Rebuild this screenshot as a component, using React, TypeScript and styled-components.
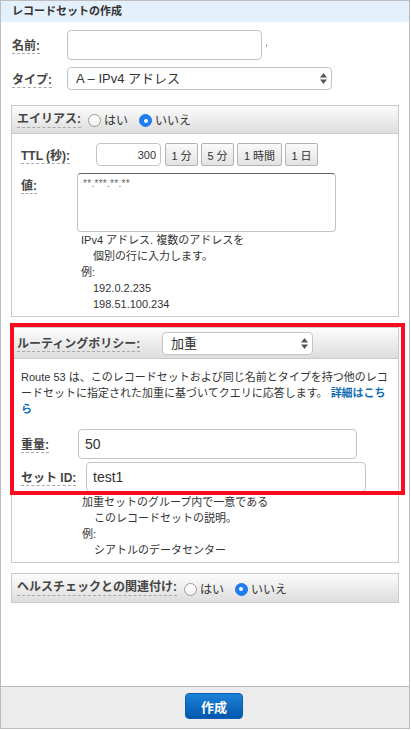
import styled, { createGlobalStyle } from 'styled-components'

const GlobalStyle = createGlobalStyle`
  body {
    margin: 0;
    background: #fff;
    font-family: "Liberation Sans", "Noto Sans CJK JP", sans-serif;
    color: #333;
  }
`

const Frame = styled.div`
  position: relative;
  width: 410px;
  height: 729px;
  box-sizing: border-box;
  border: 1px solid #bdbdbd;
  display: flex;
  flex-direction: column;
`

const Title = styled.div`
  height: 21px;
  line-height: 21px;
  padding-left: 11px;
  background: #e4f0fc;
  font-size: 11px;
  font-weight: bold;
  color: #333;
`

const Body = styled.div`
  flex: 1;
  padding: 8px 10px 0;
`

const Row = styled.div<{ $top?: number; $left?: number; $align?: string }>`
  display: flex;
  align-items: ${p => p.$align ?? 'center'};
  margin-top: ${p => p.$top ?? 0}px;
  padding-left: ${p => p.$left ?? 0}px;
`

const LabelCell = styled.div<{ $w?: number; $pt?: number }>`
  width: ${p => (p.$w ? `${p.$w}px` : 'auto')};
  flex: none;
  padding-top: ${p => p.$pt ?? 0}px;
`

const Label = styled.span`
  font-size: 12px;
  font-weight: bold;
  color: #444;
  line-height: 15px;
  border-bottom: 1px dashed #a8a8a8;
  white-space: nowrap;
`

const TextInput = styled.input<{ $w: number; $h?: number; $fs?: number; $right?: boolean }>`
  width: ${p => p.$w}px;
  height: ${p => p.$h ?? 30}px;
  box-sizing: border-box;
  border: 1px solid #c4c4c4;
  border-radius: 4px;
  padding: 0 ${p => (p.$right ? 4 : 6)}px;
  font-family: inherit;
  font-size: ${p => p.$fs ?? 14}px;
  color: #333;
  text-align: ${p => (p.$right ? 'right' : 'left')};
  background: #fff;
  outline: none;
`

const Tick = styled.span`
  width: 1px;
  height: 3px;
  margin-left: 4px;
  background: #aaa;
`

const SelectWrap = styled.div<{ $w: number }>`
  position: relative;
  width: ${p => p.$w}px;
  height: 23px;
`

const Select = styled.select`
  appearance: none;
  width: 100%;
  height: 100%;
  box-sizing: border-box;
  border: 1px solid #c4c4c4;
  border-radius: 4px;
  background: #fff;
  padding: 0 8px;
  font-family: inherit;
  font-size: 13px;
  color: #333;
  outline: none;
`

const Arrows = styled.svg`
  position: absolute;
  right: 5px;
  top: 6px;
  pointer-events: none;
`

const Panel = styled.div<{ $top: number }>`
  margin-top: ${p => p.$top}px;
  border: 1px solid #cacaca;
  background: #fff;
`

const PanelHeader = styled.div<{ $h: number; $sep?: boolean }>`
  height: ${p => p.$h}px;
  display: flex;
  align-items: center;
  padding-left: 5px;
  background: linear-gradient(#fcfcfc, #dddddd);
  border-bottom: ${p => (p.$sep ? '1px solid #cacaca' : 'none')};
`

const PanelBody = styled.div<{ $pt: number }>`
  padding: ${p => p.$pt}px 9px 4px;
`

const Radio = styled.label`
  display: flex;
  align-items: center;
  font-size: 12px;
  color: #333;
  margin-left: 7px;
  & + & {
    margin-left: 11px;
  }
`

const Dot = styled.span<{ $on?: boolean }>`
  width: 13px;
  height: 13px;
  box-sizing: border-box;
  border-radius: 50%;
  margin-right: 3px;
  margin-top: 2px;
  display: flex;
  align-items: center;
  justify-content: center;
  border: 1px solid ${p => (p.$on ? '#1c78ee' : '#9b9b9b')};
  background: ${p => (p.$on ? '#1e7df2' : 'linear-gradient(#fff, #f1f1f1)')};
  &::after {
    content: '';
    width: 4px;
    height: 4px;
    border-radius: 50%;
    background: #fff;
    display: ${p => (p.$on ? 'block' : 'none')};
  }
`

const TtlButton = styled.button<{ $w: number }>`
  width: ${p => p.$w}px;
  height: 23px;
  margin-left: 3px;
  padding: 0;
  border: 1px solid #b3b3b3;
  border-radius: 2px;
  background: linear-gradient(#fafafa, #e2e2e2);
  font-family: inherit;
  font-size: 11px;
  color: #333;
`

const TextArea = styled.textarea`
  width: 259px;
  height: 59px;
  box-sizing: border-box;
  border: 1px solid #c4c4c4;
  border-top-color: #666;
  border-radius: 4px;
  padding: 4px 5px;
  font-family: inherit;
  font-size: 10px;
  letter-spacing: 0.3px;
  color: #666;
  resize: none;
  outline: none;
`

const Help = styled.div<{ $left: number; $top?: number }>`
  margin-left: ${p => p.$left}px;
  margin-top: ${p => p.$top ?? 0}px;
  font-size: 11px;
  line-height: 16px;
  color: #333;
`

const Indent = styled.div`
  padding-left: 12px;
`

const Desc = styled.p`
  margin: 0;
  font-size: 11px;
  line-height: 16px;
  color: #333;
  white-space: nowrap;
`

const Link = styled.a`
  color: #146eb4;
  font-weight: bold;
  text-decoration: none;
`

const Highlight = styled.div`
  position: absolute;
  left: 9px;
  top: 322px;
  width: 395px;
  height: 172px;
  box-sizing: border-box;
  border: 4px solid #ff0a1e;
  pointer-events: none;
`

const Footer = styled.div`
  height: 35px;
  border-top: 1px solid #bbb;
  background: #ececec;
  display: flex;
  justify-content: center;
  align-items: flex-start;
  padding: 6px 0 0 18px;
  box-sizing: content-box;
`

const Primary = styled.button`
  width: 58px;
  height: 26px;
  border: 1px solid #0b5fb3;
  border-radius: 4px;
  background: linear-gradient(#1d82d6, #0058ad);
  color: #fff;
  font-family: inherit;
  font-size: 13px;
  font-weight: bold;
`

function UpDown() {
  return (
    <Arrows width="7" height="11" viewBox="0 0 7 11">
      <path d="M3.5 0 L7 4.5 L0 4.5 Z" fill="#555" />
      <path d="M3.5 11 L7 6.5 L0 6.5 Z" fill="#555" />
    </Arrows>
  )
}

export default function App() {
  return (
    <>
      <GlobalStyle />
      <Frame>
        <Title>レコードセットの作成</Title>
        <Body>
          <Row $left={1}>
            <LabelCell $w={55}><Label>名前:</Label></LabelCell>
            <TextInput $w={195} />
            <Tick />
          </Row>
          <Row $top={7} $left={1}>
            <LabelCell $w={55}><Label>タイプ:</Label></LabelCell>
            <SelectWrap $w={265}>
              <Select defaultValue="A">
                <option value="A">A – IPv4 アドレス</option>
              </Select>
              <UpDown />
            </SelectWrap>
          </Row>

          <Panel $top={15}>
            <PanelHeader $h={27} $sep>
              <Label>エイリアス:</Label>
              <Radio><Dot />はい</Radio>
              <Radio><Dot $on />いいえ</Radio>
            </PanelHeader>
            <PanelBody $pt={9}>
              <Row>
                <LabelCell $w={75}><Label>TTL (秒):</Label></LabelCell>
                <TextInput $w={65} $h={23} $fs={11} $right defaultValue="300" />
                <TtlButton $w={33} style={{ marginLeft: 4 }}>1 分</TtlButton>
                <TtlButton $w={33}>5 分</TtlButton>
                <TtlButton $w={45}>1 時間</TtlButton>
                <TtlButton $w={33}>1 日</TtlButton>
              </Row>
              <Row $top={7} $align="flex-start">
                <LabelCell $w={56} $pt={3}><Label>値:</Label></LabelCell>
                <TextArea defaultValue="**.***.**.**" />
              </Row>
              <Help $left={60}>
                IPv4 アドレス. 複数のアドレスを
                <Indent>個別の行に入力します。</Indent>
                例:
                <Indent>192.0.2.235</Indent>
                <Indent>198.51.100.234</Indent>
              </Help>
            </PanelBody>
          </Panel>

          <Panel $top={10}>
            <PanelHeader $h={30} $sep>
              <LabelCell $w={145}><Label>ルーティングポリシー:</Label></LabelCell>
              <SelectWrap $w={151}>
                <Select defaultValue="w">
                  <option value="w">加重</option>
                </Select>
                <UpDown />
              </SelectWrap>
            </PanelHeader>
            <PanelBody $pt={10}>
              <Desc>
                Route 53 は、このレコードセットおよび同じ名前とタイプを持つ他のレコ<br />
                ードセットに指定された加重に基づいてクエリに応答します。 <Link href="#">詳細はこち<br />ら</Link>
              </Desc>
              <Row $top={12}>
                <LabelCell $w={57}><Label>重量:</Label></LabelCell>
                <TextInput $w={279} defaultValue="50" />
              </Row>
              <Row $top={3}>
                <LabelCell $w={65}><Label>セット ID:</Label></LabelCell>
                <TextInput $w={280} defaultValue="test1" />
              </Row>
              <Help $left={61} $top={2}>
                加重セットのグループ内で一意である
                <Indent>このレコードセットの説明。</Indent>
                例:
                <Indent>シアトルのデータセンター</Indent>
              </Help>
            </PanelBody>
          </Panel>

          <Panel $top={10}>
            <PanelHeader $h={28}>
              <Label>ヘルスチェックとの関連付け:</Label>
              <Radio><Dot />はい</Radio>
              <Radio><Dot $on />いいえ</Radio>
            </PanelHeader>
          </Panel>
        </Body>
        <Footer>
          <Primary>作成</Primary>
        </Footer>
        <Highlight />
      </Frame>
    </>
  )
}
